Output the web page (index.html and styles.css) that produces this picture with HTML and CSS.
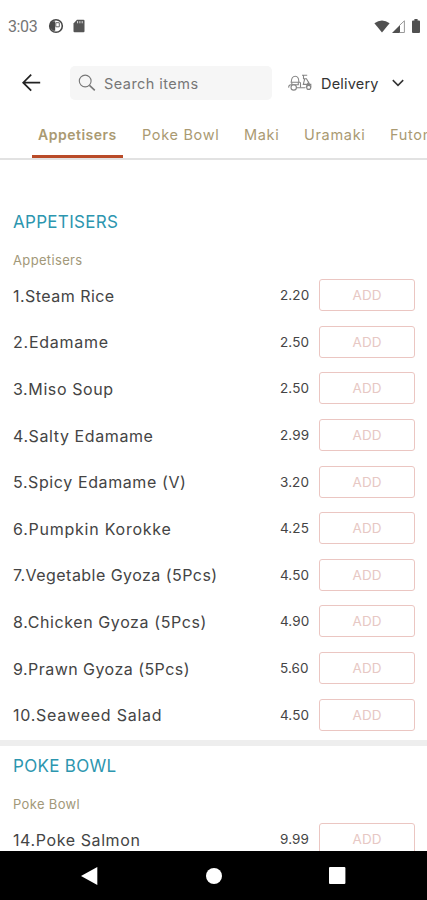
FILE: index.html
```
<!DOCTYPE html>
<html lang="en">
<head>
<meta charset="utf-8">
<title>Menu</title>
<link rel="stylesheet" href="styles.css">
</head>
<body>
<div class="screen">
  <div class="status">
    <span class="clock">3:03</span>
    <svg class="st-app" width="16" height="16" viewBox="0 0 16 16"><circle cx="8" cy="8" r="6.3" fill="none" stroke="#484848" stroke-width="1.6"/><path d="M3 3.2h4.2v9.6H5L2 9.5V5z" fill="#484848"/><path d="M7.8 4.7h3.5v4.1H7.8z" fill="#fff" stroke="#666" stroke-width="1"/></svg>
    <svg class="st-sd" width="12" height="14" viewBox="0 0 12 14"><path d="M4 .8h6.5q1 0 1 1v10.4q0 1-1 1h-9q-1 0-1-1V4.5z" fill="#555"/><path d="M4.6 2.1v2.2M6.9 2.1v2.2M9.2 2.1v2.2" stroke="#ddd" stroke-width="1"/></svg>
    <span class="grow"></span>
    <svg class="st-wifi" width="16" height="13" viewBox="0 0 16 13"><path d="M.4 3.2Q8-2.2 15.6 3.2L8 12.6z" fill="#505050"/></svg>
    <svg class="st-signal" width="13" height="13" viewBox="0 0 13 13"><path d="M0 13L8 5v8z" fill="#505050"/><path d="M7.5 5.4L12.4.8v11.7H7.5" fill="none" stroke="#999" stroke-width="1"/></svg>
    <svg class="st-battery" width="8" height="14" viewBox="0 0 8 14"><path d="M2.4 0h3.2v1.4H7q1 0 1 1V13q0 1-1 1H1q-1 0-1-1V2.4q0-1 1-1h1.4z" fill="#505050"/></svg>
  </div>
  <header class="bar">
    <svg class="back" width="20" height="20" viewBox="0 0 20 20"><path d="M19.2 9.7H2.5M10.2 1.7L2.2 9.7l8 8" fill="none" stroke="#222" stroke-width="1.7"/></svg>
    <div class="search">
      <svg width="18" height="18" viewBox="0 0 18 18"><circle cx="7.2" cy="7" r="5.9" fill="none" stroke="#777" stroke-width="1.1"/><path d="M11.5 11.3l5.3 5" stroke="#777" stroke-width="1.6"/></svg>
      <span>Search items</span>
    </div>
    <svg class="scooter" width="24" height="18" viewBox="0 0 24 18"><g fill="none" stroke="#858585" stroke-width="1.1"><path d="M3.2 8.2C3.4 4 5 2.2 7.2 2.2s3.7 2 3.7 6M2.6 8.2h9q1 .1.9 1.3v4"/><path d="M3.8 8.3v2.4h6.5V8.3M.8 13.7c-.3-1.7.5-3 2.3-3M8.6 13.8h8.6"/><circle cx="5.7" cy="13.4" r="2.7"/><path d="M14 1.2h5.2M15.5 1.5v3.3h3.4M16.7 4.8l-1.4 5.6h3.8l2-2.5M18.4 4.8l3.1 5.2M18 13.7q.2-2.5 2.8-3.3h2v3"/><circle cx="20.7" cy="13.4" r="2"/></g></svg>
    <span class="mode">Delivery</span>
    <svg class="chev" width="12" height="8" viewBox="0 0 12 8"><path d="M.8 1.1L6 6.4l5.2-5.3" fill="none" stroke="#333" stroke-width="1.5"/></svg>
  </header>
  <nav class="tabs">
    <span class="tab active">Appetisers</span><span class="tab poke">Poke Bowl</span><span class="tab maki">Maki</span><span class="tab ura">Uramaki</span><span class="tab futo">Futomaki</span>
  </nav>
  <main class="menu">
    <section>
      <h2>APPETISERS</h2>
      <h3>Appetisers</h3>
      <div class="row"><span class="name snug">1.Steam Rice</span><span class="price">2.20</span><button>ADD</button></div>
      <div class="row"><span class="name airy">2.Edamame</span><span class="price">2.50</span><button>ADD</button></div>
      <div class="row"><span class="name">3.Miso Soup</span><span class="price">2.50</span><button>ADD</button></div>
      <div class="row"><span class="name">4.Salty Edamame</span><span class="price">2.99</span><button>ADD</button></div>
      <div class="row"><span class="name">5.Spicy Edamame (V)</span><span class="price">3.20</span><button>ADD</button></div>
      <div class="row"><span class="name airy">6.Pumpkin Korokke</span><span class="price">4.25</span><button>ADD</button></div>
      <div class="row"><span class="name snug">7.Vegetable Gyoza (5Pcs)</span><span class="price">4.50</span><button>ADD</button></div>
      <div class="row"><span class="name">8.Chicken Gyoza (5Pcs)</span><span class="price">4.90</span><button>ADD</button></div>
      <div class="row"><span class="name snug">9.Prawn Gyoza (5Pcs)</span><span class="price">5.60</span><button>ADD</button></div>
      <div class="row"><span class="name airy">10.Seaweed Salad</span><span class="price">4.50</span><button>ADD</button></div>
    </section>
    <section class="next">
      <h2>POKE BOWL</h2>
      <h3>Poke Bowl</h3>
      <div class="row"><span class="name">14.Poke Salmon</span><span class="price">9.99</span><button>ADD</button></div>
    </section>
  </main>
  <footer class="nav">
    <svg width="17" height="18" viewBox="0 0 17 18"><path d="M0 9L16.3 0v18z" fill="#fff"/></svg>
    <svg width="16" height="16" viewBox="0 0 16 16"><circle cx="8" cy="8" r="8" fill="#fff"/></svg>
    <svg width="17" height="17" viewBox="0 0 17 17"><rect width="16.4" height="17" rx="1" fill="#fff"/></svg>
  </footer>
</div>
</body>
</html>
```
FILE: styles.css
```
* { box-sizing: border-box; }
body { margin: 0; background: #fff; font-family: Inter, sans-serif; color: #444; }
.screen { width: 427px; height: 900px; display: flex; flex-direction: column; overflow: hidden; }
.screen svg { flex: none; display: block; }
.status { height: 52px; flex: none; display: flex; align-items: center; padding: 0 7px 0 8px; }
.clock { font: 16px/20px Roboto, sans-serif; color: #757575; width: 40px; padding-top: 1px; letter-spacing: -.4px; }
.st-sd { margin-left: 9px; }
.grow { flex: 1; }
.st-signal { margin-left: 2px; }
.st-battery { margin-left: 7px; }
.bar { height: 62px; flex: none; display: flex; align-items: center; padding-left: 21px; }
.search { width: 202px; height: 34px; margin-left: 29px; border-radius: 5px; background: #f6f6f6; display: flex; align-items: center; gap: 8px; padding-left: 8px; color: #777; font-size: 14.5px; letter-spacing: .45px; }
.scooter { margin-left: 16px; }
.mode { margin-left: 9px; width: 71px; font-size: 14.5px; letter-spacing: .2px; color: #333; }
.tabs { height: 46px; flex: none; display: flex; padding-left: 32px; border-bottom: 2px solid #e2e2e2; overflow: hidden; font-size: 14.5px; line-height: 42px; letter-spacing: .68px; color: #aa9a72; white-space: nowrap; }
.tab { flex: none; }
.active { width: 91px; padding-left: 6px; font-weight: 600; border-bottom: 3px solid #b94b28; font-size: 14px; letter-spacing: .5px; }
.poke { width: 102px; margin-left: 19px; }
.maki { width: 60px; }
.ura { width: 86px; }
.menu { flex: 1; min-height: 0; overflow: hidden; padding-top: 45px; }
h2 { margin: 0; height: 32px; padding-left: 13px; font-size: 17px; line-height: 34px; font-weight: 400; color: #2c96af; letter-spacing: .3px; }
h3 { margin: 0; height: 35px; padding: 10px 0 0 13px; font-size: 13px; line-height: 26px; font-weight: 400; color: #a29879; letter-spacing: .35px; }
.row { height: 46.6px; display: flex; align-items: center; padding: 0 12px 0 13px; }
.name { flex: 1; padding-top: 1px; font-size: 16px; letter-spacing: .6px; white-space: nowrap; }
.snug { letter-spacing: .46px; }
.airy { letter-spacing: .76px; }
.price { width: 40px; padding-left: 1px; font-size: 13.5px; letter-spacing: .1px; }
button { width: 96px; height: 32px; padding: 0; border: 1px solid #ebc6c2; border-radius: 3px; background: #fff; font: 13.5px Inter, sans-serif; color: #e7c8c4; }
.next { border-top: 6px solid #eee; margin-top: 2px; padding-top: 3px; }
.nav { height: 49px; flex: none; background: #000; display: flex; align-items: center; justify-content: space-between; padding: 0 81px; }
```
